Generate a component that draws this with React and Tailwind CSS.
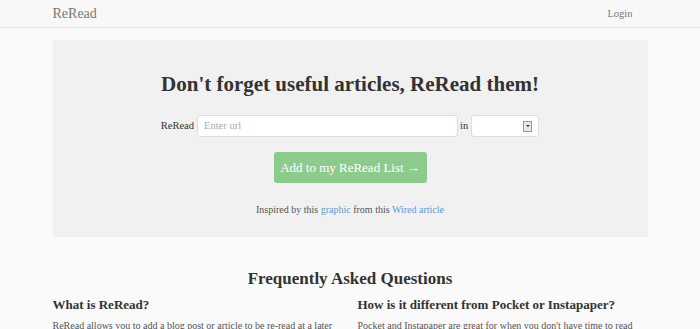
import React from 'react';

const serif = { fontFamily: '"Liberation Serif", "DejaVu Serif", serif' };

const App = () => {
    return (
        <div className="min-h-screen bg-[#fafafa] text-[#333]" style={serif}>
            <nav className="h-[28px] bg-[#f8f8f8] border-b border-[#e2e2e2]">
                <div className="w-[595px] mx-auto h-full flex items-center justify-between">
                    <span className="text-[14px] text-[#777]">ReRead</span>
                    <span className="text-[10.5px] text-[#777] mr-[15px]">Login</span>
                </div>
            </nav>
            <div className="w-[595px] mx-auto mt-[12px] bg-[#f1f1f1] h-[197px] flex flex-col items-center pt-[31px]">
                <h1 className="text-[21px] font-bold text-[#333] leading-[26px]">
                    Don't forget useful articles, ReRead them!
                </h1>
                <div className="flex items-center mt-[18px] text-[10.5px]">
                    <span className="mr-[3px]">ReRead</span>
                    <div className="w-[261px] h-[22px] bg-white border border-[#ddd] rounded-[3px] px-[6px] flex items-center text-[#aaa]">
                        Enter url
                    </div>
                    <span className="ml-[2px] mr-[3px]">in</span>
                    <div className="w-[68px] h-[22px] bg-white border border-[#ddd] rounded-[3px] flex items-center justify-end pr-[6px]">
                        <div className="w-[9px] h-[11px] bg-[#e8e8e8] border border-[#999] flex items-center justify-center">
                            <div className="w-0 h-0 border-l-[2px] border-r-[2px] border-t-[2px] border-l-transparent border-r-transparent border-t-[#333]" />
                        </div>
                    </div>
                </div>
                <button className="mt-[15px] w-[153px] h-[31px] bg-[#8ccb8c] rounded-[3px] text-white text-[13px] whitespace-nowrap">
                    Add to my ReRead List →
                </button>
                <p className="mt-[19px] text-[10px] text-[#555]">
                    Inspired by this <span className="text-[#5b9bd5]">graphic</span> from this <span className="text-[#5b9bd5]">Wired article</span>
                </p>
            </div>
            <div className="w-[595px] mx-auto">
                <h2 className="text-center text-[17px] font-bold mt-[31px] leading-[22px]">Frequently Asked Questions</h2>
                <div className="grid grid-cols-2 gap-[15px] mt-[6px]">
                    <div>
                        <h3 className="text-[13px] font-bold leading-[18px]">What is ReRead?</h3>
                        <p className="text-[10px] text-[#555] mt-[4px] leading-[16px]">ReRead allows you to add a blog post or article to be re-read at a later date. You will get reminders.</p>
                    </div>
                    <div>
                        <h3 className="text-[13px] font-bold leading-[18px]">How is it different from Pocket or Instapaper?</h3>
                        <p className="text-[10px] text-[#555] mt-[4px] leading-[16px]">Pocket and Instapaper are great for when you don't have time to read something right now.</p>
                    </div>
                </div>
            </div>
        </div>
    );
};

export default App;
